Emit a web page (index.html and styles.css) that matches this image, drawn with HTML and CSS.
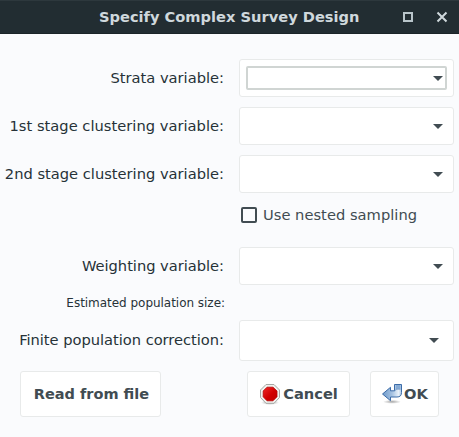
FILE: index.html
```html
<!DOCTYPE html>
<html lang="en">
<head>
<meta charset="utf-8">
<title>Specify Complex Survey Design</title>
<link rel="stylesheet" href="styles.css">
</head>
<body>
<div class="window">
  <header class="titlebar">
    <h1 class="title">Specify Complex Survey Design</h1>
    <svg class="maximize" width="10" height="10" viewBox="0 0 10 10"><rect x="1" y="1" width="8" height="8" fill="none" stroke="#b9c5ca" stroke-width="2"/></svg>
    <svg class="close" width="12" height="12" viewBox="0 0 12 12"><path d="M1.500 1.500 10.500 10.500M10.500 1.500 1.500 10.500" fill="none" stroke="#cfd8dc" stroke-width="2"/></svg>
  </header>
  <main class="form">
    <span class="label">Strata variable:</span>
    <div class="combo"><div class="focus"></div><svg class="arrow" width="10" height="5" viewBox="0 0 10 5"><path d="M0 0H10L5 5Z" fill="#414c52"/></svg></div>
    <span class="label first">1st stage clustering variable:</span>
    <div class="combo"><svg class="arrow" width="10" height="5" viewBox="0 0 10 5"><path d="M0 0H10L5 5Z" fill="#414c52"/></svg></div>
    <span class="label">2nd stage clustering variable:</span>
    <div class="combo"><svg class="arrow" width="10" height="5" viewBox="0 0 10 5"><path d="M0 0H10L5 5Z" fill="#414c52"/></svg></div>
    <div class="check"><span class="box"></span><span>Use nested sampling</span></div>
    <span class="label tight">Weighting variable:</span>
    <div class="combo"><svg class="arrow" width="10" height="5" viewBox="0 0 10 5"><path d="M0 0H10L5 5Z" fill="#414c52"/></svg></div>
    <span class="label small">Estimated population size:</span>
    <span></span>
    <span class="label tight raised">Finite population correction:</span>
    <div class="combo tall"><svg class="arrow" width="10" height="5" viewBox="0 0 10 5"><path d="M0 0H10L5 5Z" fill="#414c52"/></svg></div>
  </main>
  <footer class="actions">
    <div class="button read">Read from file</div>
    <div class="button cancel">
      <svg class="icon" width="22" height="22" viewBox="0 0 22 22">
        <defs>
          <linearGradient id="red" x1="0" y1="0" x2="1" y2="1"><stop offset="0" stop-color="#f02828"/><stop offset=".55" stop-color="#d00000"/><stop offset="1" stop-color="#c00000"/></linearGradient>
          <radialGradient id="shade"><stop offset="0" stop-color="#000" stop-opacity=".35"/><stop offset="1" stop-color="#000" stop-opacity="0"/></radialGradient>
        </defs>
        <ellipse cx="11" cy="19.5" rx="9" ry="2.5" fill="url(#shade)"/>
        <path d="M7 1.5H15L20.5 7V14.500L15 20.300H7L1.500 14.500V7Z" fill="#f1f1ee" stroke="#a6a8a4"/>
        <path d="M8 4.200H14L18 8V13.800L14 17.800H8L4.200 13.800V8Z" fill="url(#red)" stroke="#b80000" stroke-width=".8"/>
      </svg>
      <span>Cancel</span>
    </div>
    <div class="button ok">
      <svg class="icon" width="22" height="22" viewBox="0 0 22 22">
        <defs>
          <linearGradient id="blue" x1="0" y1="0" x2="1" y2="0"><stop offset="0" stop-color="#6f9bcb"/><stop offset=".5" stop-color="#a4c1e1"/><stop offset=".85" stop-color="#e9f1f9"/><stop offset="1" stop-color="#a9c4e2"/></linearGradient>
        </defs>
        <ellipse cx="11" cy="18.800" rx="9" ry="2" fill="url(#shade)"/>
        <path d="M1.500 11 9.500 4.300V7.800H13.500V1.500H20.500V9.500Q20.500 14 16 14H9.500V17.700Z" fill="url(#blue)" stroke="#3c6ca8" stroke-linejoin="round"/>
        <path d="M14.500 2H19.500V6H16L14.500 7.500Z" fill="#86abd5"/>
        <path d="M13.500 8 15.500 6.300H19.500" fill="none" stroke="#6a92c2" stroke-width=".7"/>
      </svg>
      <span>OK</span>
    </div>
  </footer>
</div>
</body>
</html>
```
FILE: styles.css
```css
* { box-sizing: border-box; }
body {
  margin: 0;
  background: #fafbfd;
  color: #263238;
  font: 14.667px/18px "DejaVu Sans", sans-serif;
}
.window { width: 459px; height: 437px; overflow: hidden; }
.titlebar {
  display: flex;
  align-items: center;
  height: 34px;
  padding: 0 11px 0 99px;
  background: #222d32;
  border-top: 1px solid #2d383d;
  border-bottom: 1px solid #1b2428;
}
.title {
  margin: 0 auto 0 0;
  color: #cfd8dc;
  font-size: 14.64px;
  line-height: 18px;
  white-space: nowrap;
}
.maximize { margin-right: 23px; }
.form {
  display: grid;
  grid-template-columns: 224px 215px;
  grid-template-rows: 38px 38px 38px 34px 38px 15px 41px;
  row-gap: 10px;
  column-gap: 15px;
  align-items: center;
  padding-top: 25px;
}
.label { text-align: right; white-space: nowrap; }
.first { letter-spacing: 0.02px; }
.tight { letter-spacing: -0.02px; }
.raised { padding-bottom: 1px; }
.small { font-size: 12px; letter-spacing: -0.03px; margin-right: -1px; }
.combo {
  position: relative;
  display: flex;
  align-items: center;
  justify-content: flex-end;
  height: 38px;
  padding-right: 10px;
  background: #fff;
  border: 1px solid #e8eaea;
  border-radius: 3px;
}
.focus {
  position: absolute;
  inset: 6px;
  border: 2px solid #d0d5d3;
  border-radius: 2px;
}
.tall { height: 41px; padding-right: 14px; }
.check {
  grid-column: 2;
  align-self: start;
  display: flex;
  align-items: center;
  gap: 6px;
  height: 24px;
  padding-left: 2px;
  color: #414c52;
  letter-spacing: 0.02px;
}
.box {
  width: 16px;
  height: 16px;
  border: 2px solid #414c52;
  border-radius: 2px;
}
.actions { display: flex; padding: 10px 20px 0; }
.button {
  display: flex;
  align-items: center;
  justify-content: center;
  height: 46px;
  background: #fff;
  border: 1px solid #e8eaea;
  border-radius: 3px;
  color: #414c52;
  font-weight: bold;
  white-space: nowrap;
}
.read { width: 141px; margin-right: auto; padding-left: 2px; font-size: 14.5px; }
.cancel { width: 103px; margin-right: 20px; gap: 2px; }
.ok { width: 69px; gap: 1px; }
```
